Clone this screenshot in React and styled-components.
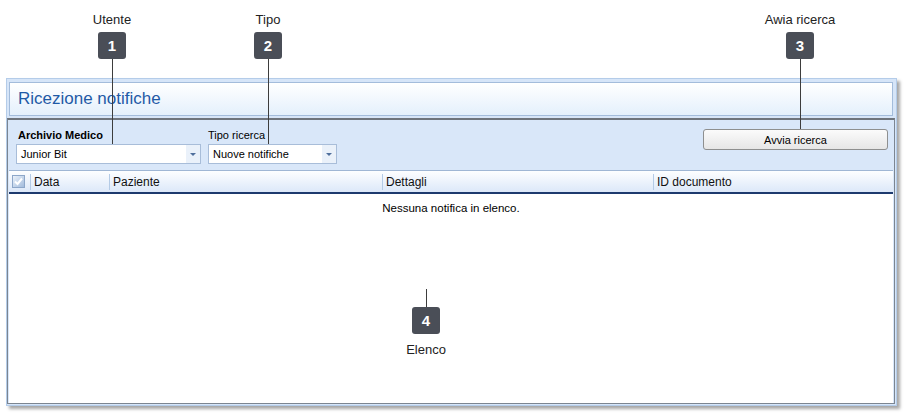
import React from 'react';
import styled, { createGlobalStyle } from 'styled-components';

const GlobalStyle = createGlobalStyle`
  html, body {
    margin: 0;
    padding: 0;
    background: #ffffff;
  }
  body {
    font-family: 'Liberation Sans', Arial, sans-serif;
  }
`;

const Page = styled.div`
  position: relative;
  width: 907px;
  height: 414px;
  padding: 78px 10px 0 6px;
  box-sizing: border-box;
  overflow: hidden;
  background: #fff;
`;

const Frame = styled.div`
  height: 328px;
  box-sizing: border-box;
  border: 1px solid #b4cce9;
  background: #d6e5f8;
  padding: 3px 1px 1px 0;
  display: flex;
  flex-direction: column;
  box-shadow: 3px 3px 3px rgba(0, 0, 0, 0.35);
`;

const TitleBar = styled.div`
  margin: 0 2px 0 2px;
  height: 34px;
  box-sizing: border-box;
  border: 1px solid #a3bcdb;
  background: linear-gradient(#ffffff, #e4f0fc);
  display: flex;
  align-items: center;
  padding-left: 8px;
  font-size: 17px;
  color: #1f5aa6;
`;

const Body = styled.div`
  flex: 1;
  margin-top: 2px;
  display: flex;
  flex-direction: column;
  border: 1px solid #7b8591;
  border-top: 2px solid #6e747c;
  background: #d9e7f9;
`;

const Filters = styled.div`
  height: 50px;
  box-sizing: border-box;
  display: flex;
  align-items: flex-start;
  padding: 9px 6px 0 8px;
  font-size: 11px;
  color: #000;
`;

const Field = styled.div`
  display: flex;
  flex-direction: column;
  width: ${(p) => p.width}px;
  margin-right: ${(p) => p.gap || 0}px;
`;

const FieldLabel = styled.div`
  height: 15px;
  line-height: 13px;
  padding-left: ${(p) => (p.bold ? 2 : 0)}px;
  font-weight: ${(p) => (p.bold ? 700 : 400)};
`;

const Combo = styled.div`
  height: 20px;
  box-sizing: border-box;
  border: 1px solid #a8bdd9;
  background: #fff;
  display: flex;
  align-items: stretch;
`;

const ComboText = styled.div`
  flex: 1;
  padding-left: 4px;
  line-height: 18px;
`;

const ComboButton = styled.div`
  width: 14px;
  background: #eaf1fa;
  display: flex;
  align-items: center;
  justify-content: center;
  &::after {
    content: '';
    border-left: 3px solid transparent;
    border-right: 3px solid transparent;
    border-top: 3px solid #4f6f9c;
  }
`;

const SearchButton = styled.button`
  margin-left: auto;
  width: 185px;
  height: 21px;
  border: 1px solid #8e8f8f;
  border-radius: 3px;
  background: linear-gradient(#fbfbfb, #e6e6e6);
  font-family: 'Liberation Sans', Arial, sans-serif;
  font-size: 11px;
  color: #000;
  padding: 0;
`;

const Grid = styled.div`
  flex: 1;
  margin: 0 1px;
  background: #fff;
  display: flex;
  flex-direction: column;
`;

const HeaderRow = styled.div`
  height: 24px;
  box-sizing: border-box;
  display: flex;
  align-items: stretch;
  background: linear-gradient(#fdfeff, #dce8f9);
  border-top: 1px solid #9fb6d4;
  border-bottom: 2px solid #1d3a6e;
  font-size: 12px;
  color: #111;
`;

const HeaderCell = styled.div`
  width: ${(p) => (p.width ? `${p.width}px` : 'auto')};
  flex: ${(p) => (p.width ? 'none' : 1)};
  display: flex;
  align-items: center;
  padding-left: ${(p) => (p.first ? 3 : 4)}px;
  box-sizing: border-box;
  position: relative;
  &::before {
    content: '';
    display: ${(p) => (p.first ? 'none' : 'block')};
    position: absolute;
    left: 0;
    top: 3px;
    bottom: 2px;
    width: 1px;
    background: #b4cbe6;
  }
`;

const Empty = styled.div`
  text-align: center;
  padding-top: 8px;
  font-size: 11.5px;
  color: #000;
`;

const Marker = styled.div`
  position: absolute;
  left: ${(p) => p.x - 50}px;
  top: ${(p) => p.top}px;
  width: 100px;
  display: flex;
  flex-direction: column;
  align-items: center;
  font-size: 13px;
  color: #222;
`;

const MarkerLabel = styled.div`
  line-height: 15px;
  height: 20px;
`;

const Badge = styled.div`
  width: 28px;
  height: 27px;
  border-radius: 3px;
  background: #4a4e57;
  color: #fff;
  font-weight: 700;
  font-size: 15px;
  display: flex;
  align-items: center;
  justify-content: center;
`;

const Leader = styled.div`
  position: absolute;
  left: ${(p) => p.x}px;
  top: ${(p) => p.from}px;
  height: ${(p) => p.to - p.from}px;
  width: 1px;
  background: #3d3d3d;
`;

const CheckIcon = () => (
  <svg width="13" height="13" viewBox="0 0 13 13">
    <defs>
      <linearGradient id="cb" x1="0" y1="0" x2="1" y2="1">
        <stop offset="0" stopColor="#eef4fb" />
        <stop offset="1" stopColor="#9fb9db" />
      </linearGradient>
    </defs>
    <rect x="0.5" y="0.5" width="12" height="12" fill="url(#cb)" stroke="#8da7c9" />
    <path d="M3 6.5 L5.5 9 L10 3.5" fill="none" stroke="#ffffff" strokeWidth="2" />
  </svg>
);

const columns = [
  { title: 'Data', width: 79 },
  { title: 'Paziente', width: 273 },
  { title: 'Dettagli', width: 271 },
  { title: 'ID documento' },
];

const markers = [
  { n: 1, x: 112, top: 12, label: 'Utente', lineTo: 144 },
  { n: 2, x: 268, top: 12, label: 'Tipo', lineTo: 144 },
  { n: 3, x: 800, top: 12, label: 'Awia ricerca', lineTo: 129 },
];

export default function App() {
  return (
    <>
      <GlobalStyle />
      <Page>
        <Frame>
          <TitleBar>Ricezione notifiche</TitleBar>
          <Body>
            <Filters>
              <Field width={185} gap={7}>
                <FieldLabel bold>Archivio Medico</FieldLabel>
                <Combo>
                  <ComboText>Junior Bit</ComboText>
                  <ComboButton />
                </Combo>
              </Field>
              <Field width={129}>
                <FieldLabel>Tipo ricerca</FieldLabel>
                <Combo>
                  <ComboText>Nuove notifiche</ComboText>
                  <ComboButton />
                </Combo>
              </Field>
              <SearchButton>Avvia ricerca</SearchButton>
            </Filters>
            <Grid>
              <HeaderRow>
                <HeaderCell width={21} first>
                  <CheckIcon />
                </HeaderCell>
                {columns.map((c) => (
                  <HeaderCell key={c.title} width={c.width}>
                    {c.title}
                  </HeaderCell>
                ))}
              </HeaderRow>
              <Empty>Nessuna notifica in elenco.</Empty>
            </Grid>
          </Body>
        </Frame>

        {markers.map((m) => (
          <React.Fragment key={m.n}>
            <Marker x={m.x} top={m.top}>
              <MarkerLabel>{m.label}</MarkerLabel>
              <Badge>{m.n}</Badge>
            </Marker>
            <Leader x={m.x} from={59} to={m.lineTo} />
          </React.Fragment>
        ))}

        <Leader x={426} from={289} to={307} />
        <Marker x={426} top={307}>
          <Badge>4</Badge>
          <MarkerLabel style={{ marginTop: 8 }}>Elenco</MarkerLabel>
        </Marker>
      </Page>
    </>
  );
}
